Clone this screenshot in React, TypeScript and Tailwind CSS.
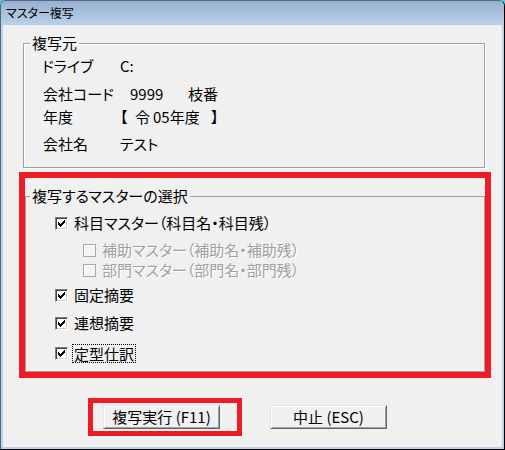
import React from 'react';

// classic 7x7 check mark, drawn as 1px columns
const checkCols: [number, number][] = [[1, 3], [2, 4], [3, 5], [4, 4], [5, 3], [6, 2], [7, 1]];

function CheckBox({ checked, disabled }: { checked?: boolean; disabled?: boolean }) {
  if (disabled) {
    return (
      <span className="w-[13px] h-[13px] shrink-0 border border-[#a8a8a8] bg-[#f4f4f4] shadow-[inset_1px_1px_0_#fff]" />
    );
  }
  return (
    <span className="w-[13px] h-[13px] shrink-0 flex items-center justify-center border border-t-[#808080] border-l-[#808080] border-b-white border-r-white bg-white shadow-[inset_1px_1px_0_#404040,inset_-1px_-1px_0_#d4d0c8]">
      {checked && (
        <svg width="9" height="9" viewBox="0 0 9 9" shapeRendering="crispEdges">
          {checkCols.map(([x, y]) => (
            <rect key={x} x={x - 0.5} y={y - 0.5} width="1" height="3" fill="#000" />
          ))}
        </svg>
      )}
    </span>
  );
}

interface OptionProps {
  label: string;
  checked?: boolean;
  disabled?: boolean;
  focus?: boolean;
  className: string;
}

function Option({ label, checked, disabled, focus, className }: OptionProps) {
  return (
    <div className={`h-[20px] flex items-center ${className}`}>
      <CheckBox checked={checked} disabled={disabled} />
      <span
        className={
          disabled
            ? 'ml-[5px] px-[1px] text-[#a0a0a0] [text-shadow:1px_1px_0_#fff]'
            : focus
              ? 'ml-[5px] px-[1px] h-[17px] leading-[17px] outline-1 outline-dotted outline-black'
              : 'ml-[5px] px-[1px]'
        }
      >
        {label}
      </span>
    </div>
  );
}

const buttonClass =
  'w-[117px] h-[24px] shrink-0 flex items-center justify-center bg-[#f0f0f0] border border-t-[#e3e3e3] border-l-[#e3e3e3] border-b-[#646464] border-r-[#646464] shadow-[inset_1px_1px_0_#fff,inset_-1px_-1px_0_#a0a0a0] text-[15px]';

export default function App() {
  return (
    <div className="w-[505px] h-[450px] bg-[#5cc6e6] font-['Noto_Sans_CJK_JP',sans-serif] text-black [font-feature-settings:'palt']">
      <div className="w-full h-full flex flex-col rounded-t-[6px] border border-[#55687e] border-r-black border-b-black bg-[#b9d1ea] overflow-hidden">
        {/* title bar */}
        <div className="h-[24px] shrink-0 flex items-center pl-[5px] text-[12px] bg-linear-to-b from-[#98b1cf] to-[#b9d1ea]">
          マスター複写
        </div>

        <div className="flex-1 mx-[2px] mb-[2px] bg-[#f0f0f0] flex flex-col">
          {/* 複写元 */}
          <fieldset className="mt-[8px] ml-[20px] w-[462px] h-[135px] p-0 border border-[#a0a0a0] shadow-[inset_1px_1px_0_#fff,1px_1px_0_#fff] text-[15px]">
            <legend className="ml-[6px] px-[2px] leading-[20px]">複写元</legend>
            <div className="mt-[3px] h-[20px] flex items-center pl-[18px]">
              <span className="w-[78px]">ドライブ</span>
              <span>C:</span>
            </div>
            <div className="mt-[8px] h-[20px] flex items-center pl-[19px]">
              <span className="w-[87px]">会社コード</span>
              <span className="w-[58px]">9999</span>
              <span>枝番</span>
            </div>
            <div className="mt-[3px] h-[20px] flex items-center pl-[19px]">
              <span className="w-[77px]">年度</span>
              <span className="w-[15px]">【</span>
              <span className="w-[18px]">令</span>
              <span className="w-[58px]">05年度</span>
              <span>】</span>
            </div>
            <div className="mt-[7px] h-[20px] flex items-center pl-[19px]">
              <span className="w-[77px]">会社名</span>
              <span>テスト</span>
            </div>
          </fieldset>

          {/* 複写するマスターの選択 */}
          <div className="mt-[4px] ml-[16px] w-[472px] h-[206px] border-[6px] border-[#ed1c24]">
            <fieldset className="mt-[8px] w-full h-[186px] p-0 border border-[#a0a0a0] text-[15px]">
              <legend className="ml-[4px] px-[2px] leading-[20px]">複写するマスターの選択</legend>
              <Option className="mt-[7px] pl-[29px]" checked label="科目マスター（科目名・科目残）" />
              <Option className="mt-[7px] pl-[57px]" disabled label="補助マスター（補助名・補助残）" />
              <Option className="mt-0 pl-[57px]" disabled label="部門マスター（部門名・部門残）" />
              <Option className="mt-[5px] pl-[29px]" checked label="固定摘要" />
              <Option className="mt-[8px] pl-[29px]" checked label="連想摘要" />
              <Option className="mt-[10px] pl-[29px]" checked focus label="定型仕訳" />
            </fieldset>
          </div>

          {/* buttons */}
          <div className="mt-[20px] flex items-start">
            <div className="ml-[85px] w-[154px] h-[38px] border-[5px] border-[#ed1c24] pl-[10px] pt-[2px]">
              <button className={buttonClass}>複写実行 (F11)</button>
            </div>
            <button className={`ml-[28px] mt-[7px] ${buttonClass}`}>中止 (ESC)</button>
          </div>
        </div>
      </div>
    </div>
  );
}
